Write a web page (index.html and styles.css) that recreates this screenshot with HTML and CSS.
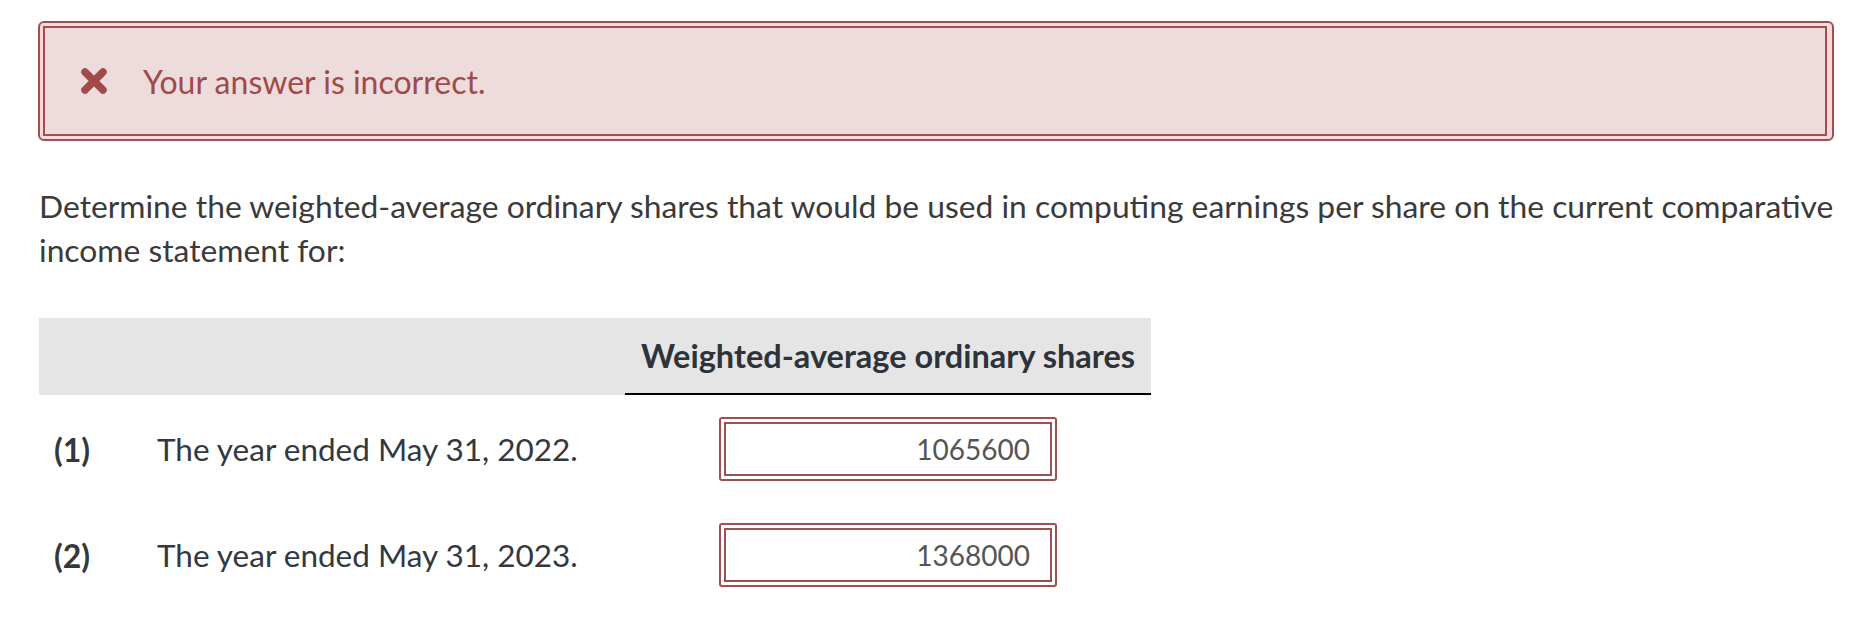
FILE: index.html
```html
<!DOCTYPE html>
<html>
<head>
<meta charset="utf-8">
<link rel="stylesheet" href="styles.css">
</head>
<body>
<div class="page">
  <div class="alert">
    <div class="alert-inner">
      <svg class="alert-icon" viewBox="0 0 28 28" width="28" height="28">
        <path d="M5 5 L23 23 M23 5 L5 23" stroke="#a04a4a" stroke-width="7.5" stroke-linecap="round"/>
      </svg>
      <span class="alert-text">Your answer is incorrect.</span>
    </div>
  </div>

  <p class="question">Determine the weighted-average ordinary shares that would be used in computing earnings per share on the current comparative income statement for:</p>

  <div class="table">
    <div class="thead">
      <div class="th-label"></div>
      <div class="th-col">Weighted-average ordinary shares</div>
    </div>
    <div class="row">
      <div class="label"><span class="num">(1)</span><span class="desc">The year ended May 31, 2022.</span></div>
      <div class="cell">
        <div class="input-wrap"><div class="input">1065600</div></div>
      </div>
    </div>
    <div class="row">
      <div class="label"><span class="num">(2)</span><span class="desc">The year ended May 31, 2023.</span></div>
      <div class="cell">
        <div class="input-wrap"><div class="input">1368000</div></div>
      </div>
    </div>
  </div>
</div>
</body>
</html>
```
FILE: styles.css
```css
html, body {
  margin: 0;
  padding: 0;
  background: #ffffff;
}
body {
  font-family: Lato, "Open Sans", sans-serif;
  color: #3a3a3a;
}
.page {
  padding: 21px 20px 0 38px;
}
.alert {
  border: 2px solid #9c5050;
  border-radius: 6px;
  background: #f7d9d9;
  padding: 3px 5px 3px 3px;
}
.alert-inner {
  border: 2px solid #9c5050;
  background: #eedcdd;
  height: 110px;
  box-sizing: border-box;
  display: flex;
  align-items: center;
  padding-left: 35px;
}
.alert-icon {
  flex: none;
}
.alert-text {
  margin-left: 35px;
  font-size: 32px;
  color: #a04a4a;
}
.question {
  margin: 43px -14px 0 1px;
  font-size: 31.8px;
  line-height: 44px;
  color: #3a3a3a;
}
.table {
  margin-top: 46px;
  width: 1112px;
  margin-left: 1px;
}
.thead {
  display: flex;
  background: #e5e5e5;
  height: 77px;
  margin-bottom: 1px;
}
.th-label {
  width: 586px;
}
.th-col {
  flex: 1;
  display: flex;
  align-items: center;
  justify-content: center;
  font-weight: 700;
  font-size: 32.5px;
  color: #2d3339;
  border-bottom: 2px solid #000;
}
.row {
  display: flex;
  align-items: center;
  height: 106px;
}
.label {
  width: 586px;
  display: flex;
  align-items: center;
  font-size: 31.5px;
  color: #333840;
}
.num {
  font-weight: 700;
  font-size: 32px;
  width: 118px;
  padding-left: 15px;
  box-sizing: border-box;
}
.cell {
  flex: 1;
  display: flex;
  justify-content: center;
}
.input-wrap {
  width: 338px;
  height: 64px;
  box-sizing: border-box;
  border: 2px solid #9c5050;
  border-radius: 3px;
  padding: 3px;
}
.input {
  height: 100%;
  box-sizing: border-box;
  border: 2px solid #9c5050;
  display: flex;
  align-items: center;
  justify-content: flex-end;
  padding-right: 20px;
  font-size: 28px;
  color: #555555;
}
```
